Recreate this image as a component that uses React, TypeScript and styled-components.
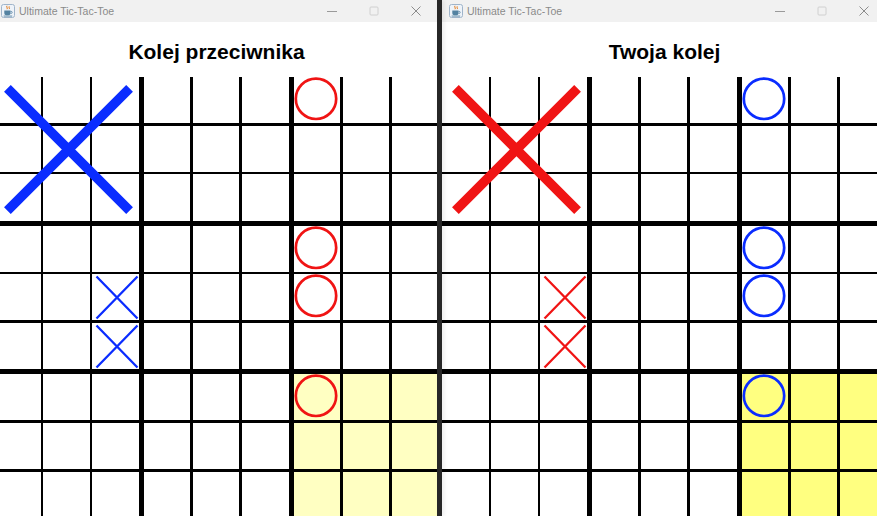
import React from 'react'
import styled, { createGlobalStyle } from 'styled-components'

type Mark = 'X' | 'O'

const CELL_W = 46.6
const CELL_H = 46.2

// marks by global row-col, same position in both windows
const smallMarks: Record<string, Mark> = {
  '0-6': 'O',
  '3-6': 'O',
  '4-6': 'O',
  '6-6': 'O',
  '4-2': 'X',
  '5-2': 'X',
}
const wonBoards: Record<number, Mark> = { 0: 'X' }
const activeBoard = 8

const BLUE = '#0a2cff'
const RED = '#f01414'

export default function App() {
  return (
    <>
      <GlobalStyle />
      <Desktop>
        <GameWindow
          width={443}
          heading='Kolej przeciwnika'
          xColor={BLUE}
          oColor={RED}
          activeBg='#ffffc2'
        />
        <Divider />
        <GameWindow
          width={445}
          heading='Twoja kolej'
          xColor={RED}
          oColor={BLUE}
          activeBg='#ffff80'
        />
      </Desktop>
    </>
  )
}

type WindowProps = {
  width: number
  heading: string
  xColor: string
  oColor: string
  activeBg: string
}

function GameWindow({ width, heading, xColor, oColor, activeBg }: WindowProps) {
  const colorOf = (m: Mark) => (m === 'X' ? xColor : oColor)

  return (
    <Frame $width={width}>
      <Inner>
        <TitleBar>
          <JavaIcon />
          <TitleText>Ultimate Tic-Tac-Toe</TitleText>
          <Controls>
            <CtrlButton>
              <svg width='10' height='10' viewBox='0 0 10 10'>
                <line x1='0' y1='5.5' x2='10' y2='5.5' stroke='#9a9a9a' strokeWidth='1' />
              </svg>
            </CtrlButton>
            <CtrlButton>
              <svg width='10' height='10' viewBox='0 0 10 10'>
                <rect x='1' y='1' width='8' height='8' rx='1' fill='none' stroke='#d0d0d0' strokeWidth='1' />
              </svg>
            </CtrlButton>
            <CtrlButton>
              <svg width='10' height='10' viewBox='0 0 10 10'>
                <path d='M0.5 0.5 L9.5 9.5 M9.5 0.5 L0.5 9.5' stroke='#8c8c8c' strokeWidth='1' />
              </svg>
            </CtrlButton>
          </Controls>
        </TitleBar>

        <Heading>{heading}</Heading>

        <Board>
          {Array.from({ length: 9 }, (_, b) => {
            const br = Math.floor(b / 3)
            const bc = b % 3
            return (
              <BigCell key={b}>
                {Array.from({ length: 9 }, (_, i) => {
                  const row = br * 3 + Math.floor(i / 3)
                  const col = bc * 3 + (i % 3)
                  const mark = smallMarks[`${row}-${col}`]
                  return (
                    <Cell key={i} $bg={b === activeBoard ? activeBg : '#fff'}>
                      {mark === 'X' && <SmallX color={colorOf('X')} />}
                      {mark === 'O' && <SmallO color={colorOf('O')} />}
                    </Cell>
                  )
                })}
                {wonBoards[b] === 'X' && (
                  <BigMark viewBox='0 0 144.8 143.6'>
                    <path
                      d='M13.4 11.4 L135.6 133.6 M13.4 133.6 L135.6 11.4'
                      stroke={colorOf('X')}
                      strokeWidth='9.5'
                      strokeLinecap='butt'
                    />
                  </BigMark>
                )}
              </BigCell>
            )
          })}
        </Board>
      </Inner>
    </Frame>
  )
}

function SmallX({ color }: { color: string }) {
  return (
    <MarkSvg viewBox={`0 0 ${CELL_W} ${CELL_H}`}>
      <path d='M4.5 2.5 L45.5 44.5 M4.5 44.5 L45.5 2.5' stroke={color} strokeWidth='2.3' />
    </MarkSvg>
  )
}

function SmallO({ color }: { color: string }) {
  return (
    <MarkSvg viewBox={`0 0 ${CELL_W} ${CELL_H}`}>
      <circle cx='22' cy='21.8' r='20.2' fill='none' stroke={color} strokeWidth='2.7' />
    </MarkSvg>
  )
}

function JavaIcon() {
  return (
    <IconSvg width='14' height='14' viewBox='0 0 14 14'>
      <rect x='0.5' y='0.5' width='13' height='13' rx='2' fill='#eef3f9' stroke='#9fb4ca' />
      <path d='M6 1.8c-1 1.4 1 1.9 0 3.4M8.2 2.4c-.8 1.1.8 1.5 0 2.7' stroke='#e76f00' fill='none' strokeWidth='1' />
      <path d='M3.3 6.6h6.2v2.6a2 2 0 0 1-2 2H5.3a2 2 0 0 1-2-2z' fill='#5382a1' />
      <path d='M9.5 7.4h.7a1 1 0 0 1 0 2h-.7' stroke='#5382a1' fill='none' strokeWidth='0.8' />
      <rect x='2.6' y='11.6' width='8.6' height='0.9' fill='#5382a1' />
    </IconSvg>
  )
}

const GlobalStyle = createGlobalStyle`
  html, body {
    margin: 0;
    padding: 0;
    background: #fff;
    overflow: hidden;
  }
`

const Desktop = styled.div`
  display: flex;
  width: 883px;
  height: 516px;
  margin-left: -6px;
  overflow: hidden;
`

const Frame = styled.div<{ $width: number }>`
  width: ${p => p.$width}px;
  flex-shrink: 0;
  overflow: hidden;
  background: #fff;
`

const Inner = styled.div`
  width: 445px;
  display: flex;
  flex-direction: column;
`

const Divider = styled.div`
  width: 5px;
  flex-shrink: 0;
  background: #272727;
  box-shadow: 2px 0 4px rgba(0, 0, 0, 0.08);
  z-index: 1;
`

const TitleBar = styled.div`
  height: 22px;
  display: flex;
  align-items: center;
  background: #f1f1f1;
  font-family: 'Liberation Sans', Arial, sans-serif;
`

const IconSvg = styled.svg`
  margin-left: 7px;
  flex-shrink: 0;
`

const TitleText = styled.span`
  margin-left: 4px;
  font-size: 10.5px;
  color: #8a8a8a;
  white-space: nowrap;
`

const Controls = styled.div`
  margin-left: auto;
  margin-right: 2px;
  display: flex;
  height: 100%;
`

const CtrlButton = styled.div`
  width: 42px;
  height: 100%;
  display: flex;
  align-items: center;
  justify-content: center;
`

const Heading = styled.div`
  height: 55px;
  box-sizing: border-box;
  padding-top: 4px;
  display: flex;
  align-items: center;
  justify-content: center;
  font-family: 'Liberation Sans', Arial, sans-serif;
  font-weight: 700;
  font-size: 21px;
  color: #000;
`

const Board = styled.div`
  display: grid;
  grid-template-columns: repeat(3, max-content);
  gap: 5px;
  width: max-content;
  background: #000;
`

const BigCell = styled.div`
  position: relative;
  display: grid;
  grid-template-columns: repeat(3, ${CELL_W}px);
  grid-template-rows: repeat(3, ${CELL_H}px);
  gap: 2.5px;
`

const Cell = styled.div<{ $bg: string }>`
  background: ${p => p.$bg};
  position: relative;
`

const MarkSvg = styled.svg`
  display: block;
  width: 100%;
  height: 100%;
  overflow: visible;
`

const BigMark = styled.svg`
  position: absolute;
  inset: 0;
  width: 100%;
  height: 100%;
  overflow: visible;
  pointer-events: none;
`
